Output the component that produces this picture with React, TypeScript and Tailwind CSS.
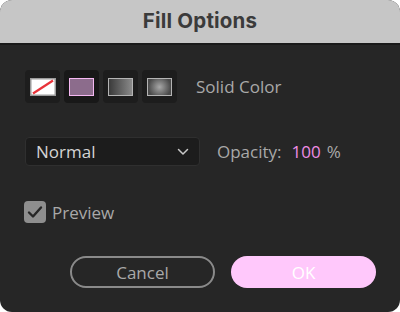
import React from "react";

function Swatch({ selected, children }: { selected?: boolean; children: React.ReactNode }) {
  return (
    <div
      className={
        "w-[35px] h-[33px] rounded-[4px] flex items-center justify-center " +
        (selected ? "bg-[#181818]" : "bg-[#1d1d1d]")
      }
    >
      {children}
    </div>
  );
}

export default function App() {
  const font = { fontFamily: '"Open Sans", "Noto Sans", sans-serif' };
  return (
    <div className="w-[400px] h-[312px] bg-white" style={font}>
      <div className="w-full h-full rounded-[12px] overflow-hidden bg-[#262626] flex flex-col">
        <div className="h-[45px] shrink-0 bg-[#c6c6c6] border-b-2 border-[#1a1a1a] flex items-center justify-center">
          <span
            className="text-[20.5px] font-bold text-[#3b3b3b] leading-none tracking-[0.2px]"
            style={{ fontFamily: 'Inter, "Open Sans", sans-serif' }}
          >
            Fill Options
          </span>
        </div>
        <div className="flex flex-col pl-[25px] pt-[25px]">
          <div className="flex items-center h-[33px]">
            <div className="flex gap-[4px]">
              <Swatch>
                <svg width="26" height="18" viewBox="0 0 26 18">
                  <rect x="0.75" y="0.75" width="24.5" height="16.5" fill="#ffffff" stroke="#9a9a9a" strokeWidth="1.5" />
                  <line x1="3" y1="15.5" x2="23" y2="2.5" stroke="#e8333a" strokeWidth="2.2" />
                </svg>
              </Swatch>
              <Swatch selected>
                <div className="w-[25px] h-[18px] border-[1.5px] border-[#f5b8f2] bg-[#8c6c8c]" />
              </Swatch>
              <Swatch>
                <div className="w-[25px] h-[18px] border-[1.5px] border-[#b4b4b4] bg-[linear-gradient(to_right,#3a3a3a,#8a8a8a)]" />
              </Swatch>
              <Swatch>
                <div className="w-[25px] h-[18px] border-[1.5px] border-[#b4b4b4] bg-[radial-gradient(circle,#a8a8a8_0%,#4a4a4a_80%)]" />
              </Swatch>
            </div>
            <span className="ml-[19px] text-[17px] leading-none text-[#a9a9a9]">Solid Color</span>
          </div>

          <div className="flex items-center h-[29px] mt-[34px]">
            <div className="w-[175px] h-[29px] rounded-[4px] bg-[#1c1c1c] border border-[#2f2f2f] flex items-center justify-between pl-[10px] pr-[10px]">
              <span className="text-[17px] leading-none text-[#d4d4d4]">Normal</span>
              <svg width="12" height="8" viewBox="0 0 12 8">
                <path d="M1.5 1.5 L6 6 L10.5 1.5" fill="none" stroke="#c8c8c8" strokeWidth="1.5" strokeLinecap="round" strokeLinejoin="round" />
              </svg>
            </div>
            <span className="ml-[17px] text-[17px] leading-none text-[#a9a9a9]">Opacity:</span>
            <span className="ml-[10px] text-[17px] leading-none text-[#ef8de4]">100</span>
            <span className="ml-[6px] text-[17px] leading-none text-[#a9a9a9]">%</span>
          </div>

          <div className="flex items-center h-[22px] mt-[35px]">
            <div className="w-[22px] h-[22px] rounded-[4px] bg-[#8e8e8e] flex items-center justify-center -ml-[1px]">
              <svg width="16" height="14" viewBox="0 0 16 14">
                <path d="M2 7.5 L6 11.5 L14 2.5" fill="none" stroke="#262626" strokeWidth="2.4" strokeLinecap="round" strokeLinejoin="round" />
              </svg>
            </div>
            <span className="ml-[6px] text-[17px] leading-none text-[#a9a9a9]">Preview</span>
          </div>

          <div className="flex h-[32px] mt-[33px] ml-[45px] gap-[16px]">
            <div className="w-[145px] h-[32px] rounded-full border-2 border-[#8a8a8a] flex items-center justify-center text-[17px] leading-none text-[#a9a9a9]">
              Cancel
            </div>
            <div className="w-[145px] h-[32px] rounded-full bg-[#ffc8fb] flex items-center justify-center text-[17px] leading-none text-white">
              OK
            </div>
          </div>
        </div>
      </div>
    </div>
  );
}
